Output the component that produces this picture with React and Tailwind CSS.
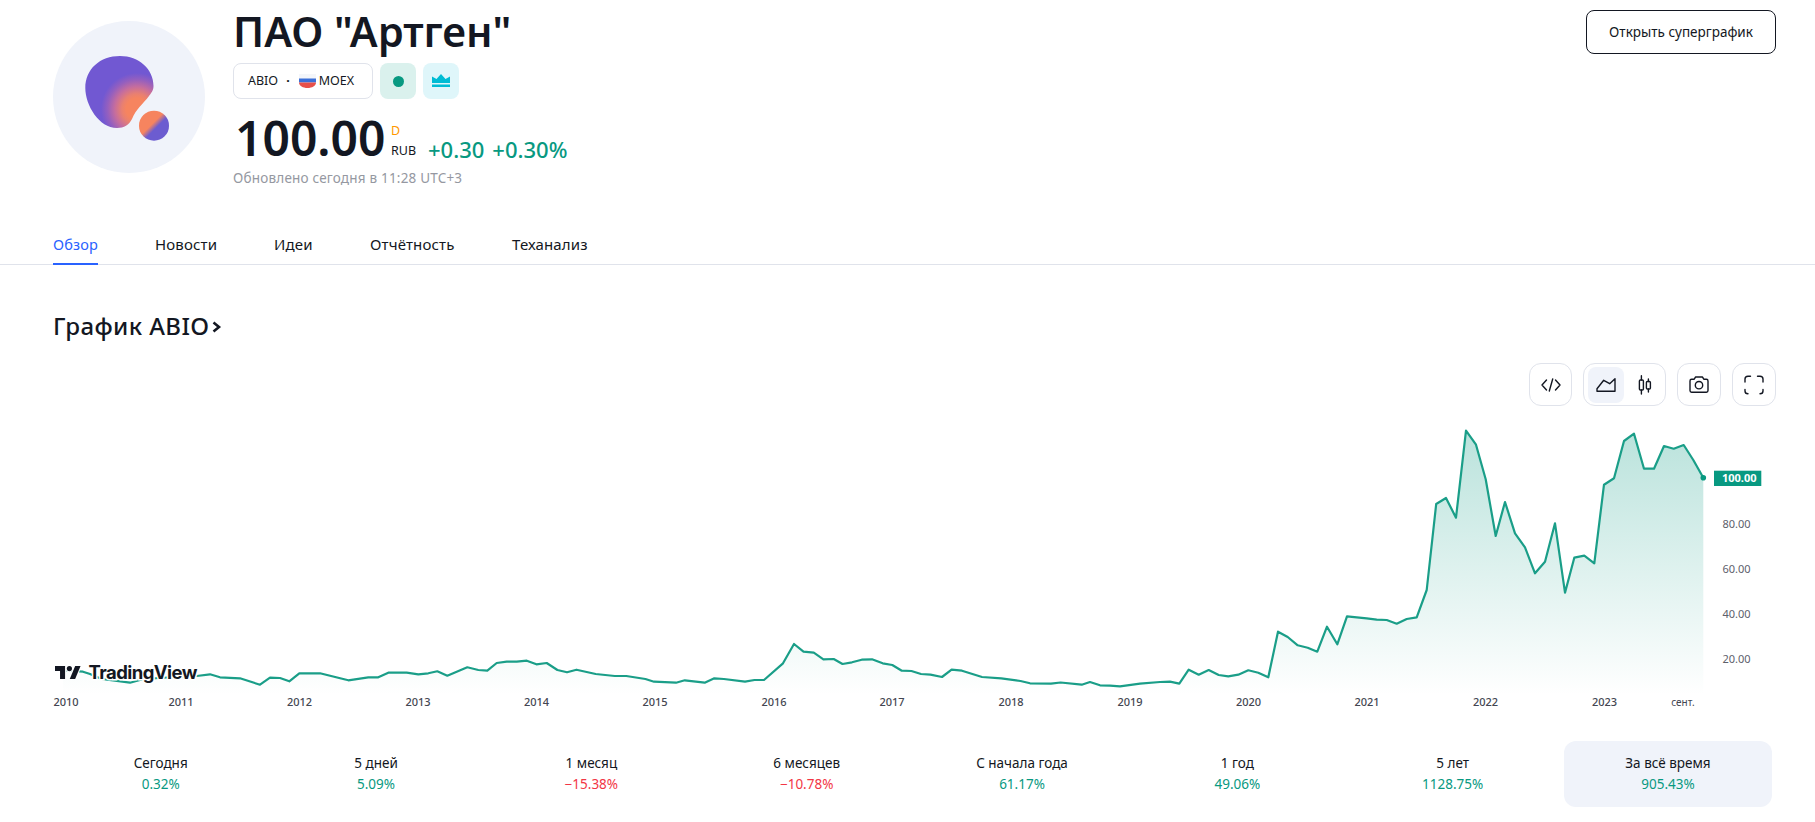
const FONT = '"Noto Sans", "Open Sans", sans-serif';

// Monthly close, already projected onto page pixels
const LINE = [
  [63,670],[73,671],[83,671.7],[90,674],[101.7,679],[130,682.7],[140,680],[158,678],[177,677],[196.7,676],[210,674.3],[220,677.3],[240,678.3],[260,684.7],[270,677.7],[280,678],[289.3,681.3],[299.3,673.3],[320,673.3],[348.3,680.3],[368.3,677.3],[378.3,677.3],[388.3,672.7],[406.7,672.7],[418.3,674.3],[428.3,673.3],[437.3,671.3],[447.3,675.7],[467.3,667.3],[478.3,670],[487.3,670.7],[496.7,663],[506.7,661.7],[516.7,661.7],[526.8,660.7],[536.4,664.3],[546.7,663],[557.4,670],[567,672.3],[576.5,669.7],[595.7,674],[614.8,676],[626.3,676],[645.4,679],[654,681.7],[676,682.7],[684.8,680.3],[704.7,682.7],[714.3,678.3],[723.9,679],[745,681.7],[754.5,680],[764,680],[783,663.3],[794,644],[803.5,651.7],[813.8,652.7],[823.4,659.3],[833.7,659],[842.5,664],[852,662.3],[861.7,659.7],[872,659.3],[882.7,663.3],[892.3,665],[901.8,670.7],[911.4,671],[921,674],[930.5,674.7],[942,677],[951.6,669.7],[962,670.7],[982,677],[1001.3,678.3],[1020.5,681],[1030,683.3],[1051,683.7],[1060.6,682.5],[1081.7,684.7],[1090,682],[1100,685.3],[1110,685.7],[1120,686.3],[1140,683.7],[1160,682],[1170,681.7],[1179.3,683.7],[1188.7,669.7],[1198.7,674.7],[1208.7,670],[1218.7,675],[1228.3,676.3],[1238.3,674.7],[1248.3,670.3],[1258.3,672.7],[1268.3,677.3],[1278,631.7],[1287.7,637],[1297.7,645.3],[1307.7,647.7],[1317.3,651.7],[1327,626.7],[1337.3,644.3],[1347,616.3],[1366.7,618.3],[1376.7,619.7],[1386.7,620],[1396.7,623.7],[1406.7,619],[1416.7,617.3],[1426.7,590],[1436.2,504],[1446,498],[1456,517.7],[1466,430.7],[1476,444.7],[1485.7,479.3],[1495.7,536],[1505,502],[1515,533.3],[1525,547.3],[1535,573.3],[1545,561.7],[1555,523.3],[1565,592.7],[1574.3,557.7],[1584.3,555.7],[1594.3,563.3],[1604,484.7],[1614,478.3],[1624,441],[1634,433.7],[1644,468.7],[1654,468.7],[1664,446],[1673.7,448.7],[1683.7,445],[1693.3,460],[1703.3,477.7],
];

const YEARS = [
  ['2010',66],['2011',181],['2012',299.5],['2013',418],['2014',536.5],['2015',655],['2016',774],['2017',892],['2018',1011],['2019',1130],['2020',1248.5],['2021',1367],['2022',1485.5],['2023',1604.5],
];

const PRICES = [['80.00',523.7],['60.00',568.6],['40.00',613.6],['20.00',658.6]];

const PERIODS = [
  { label: 'Сегодня', value: '0.32%', up: true },
  { label: '5 дней', value: '5.09%', up: true },
  { label: '1 месяц', value: '−15.38%', up: false },
  { label: '6 месяцев', value: '−10.78%', up: false },
  { label: 'С начала года', value: '61.17%', up: true },
  { label: '1 год', value: '49.06%', up: true },
  { label: '5 лет', value: '1128.75%', up: true },
  { label: 'За всё время', value: '905.43%', up: true, active: true },
];

const TABS = [
  { label: 'Обзор', cls: 'mr-[57px] w-[45px] border-b-2 border-[#2962ff] text-[14.5px] text-[#2962ff]' },
  { label: 'Новости', cls: 'mr-[58px] w-[61px]' },
  { label: 'Идеи', cls: 'mr-[58px] w-[38px]' },
  { label: 'Отчётность', cls: 'mr-[58px] w-[84px]' },
  { label: 'Теханализ', cls: 'w-[80px]' },
];

function CompanyLogo() {
  return (
    <svg width="152" height="152" viewBox="0 0 152 152" className="shrink-0">
      <defs>
        <radialGradient id="blob" gradientUnits="userSpaceOnUse" cx="84" cy="88" r="36">
          <stop offset="0.3" stopColor="#f6845f" />
          <stop offset="0.42" stopColor="#e98070" />
          <stop offset="0.62" stopColor="#c56d9e" />
          <stop offset="0.82" stopColor="#945fbf" />
          <stop offset="1" stopColor="#7158d2" />
        </radialGradient>
        <linearGradient id="drop" x1="0.2" y1="0.2" x2="0.8" y2="0.8">
          <stop offset="0.4" stopColor="#f6845f" />
          <stop offset="0.62" stopColor="#6c5cd0" />
        </linearGradient>
      </defs>
      <circle cx="76" cy="76" r="76" fill="#f0f3fa" />
      <path
        d="M67 35C86 35 100.5 48 100.5 65C100.5 70 98 72 96 75C90 83 83 88 79 98C76 104 71 107 64 107C46 107 32.3 84 32.3 67C32.3 48 47 35 67 35Z"
        fill="url(#blob)"
      />
      <circle cx="101" cy="104.7" r="15" fill="url(#drop)" />
    </svg>
  );
}

function Flag() {
  return (
    <svg width="17" height="14" viewBox="0 0 17 14" className="shrink-0">
      <path d="M0 0H17V5H0Z" fill="#f4f6fa" />
      <path d="M0 4.5H17V8.5H0Z" fill="#3b6fd8" />
      <path d="M0 8.5H17C17 11.8 13 14 8.5 14C4 14 0 11.8 0 8.5Z" fill="#e8504a" />
    </svg>
  );
}

function ToolIcon({ children }) {
  return (
    <svg width="28" height="28" viewBox="0 0 28 28" fill="none" stroke="#131722" strokeWidth="1.4" strokeLinecap="round" strokeLinejoin="round">
      {children}
    </svg>
  );
}

function ChartToolbar() {
  const box = 'flex h-[43px] items-center justify-center rounded-xl border border-[#e0e3eb] bg-white';
  return (
    <div className="flex justify-end gap-[11px] pr-[39px]">
      <div className={`${box} w-[43px]`}>
        <ToolIcon>
          <path d="M9.5 9L5 14L9.5 19M18.5 9L23 14L18.5 19M15.7 8L12.3 20" />
        </ToolIcon>
      </div>
      <div className={`${box} w-[83px] gap-[2px] px-[3px]`}>
        <div className="flex h-[36px] w-[36px] items-center justify-center rounded-lg bg-[#f0f3fa]">
          <ToolIcon>
            <path d="M5 20.3V17.7L11.7 9.3L17.7 12.7L23 7.7V20.3Z" />
          </ToolIcon>
        </div>
        <div className="flex h-[36px] w-[36px] items-center justify-center">
          <ToolIcon>
            <path d="M11.4 4.8V9M11.4 19V23M18.4 8V10.5M18.4 18V21" />
            <rect x="9.4" y="9" width="4" height="10" rx="1" />
            <rect x="16.4" y="10.5" width="4" height="7.5" rx="1" />
          </ToolIcon>
        </div>
      </div>
      <div className={`${box} w-[44px]`}>
        <ToolIcon>
          <path d="M5 10C5 9 5.6 8.3 6.6 8.3H9L10.6 6H17.4L19 8.3H21.4C22.4 8.3 23 9 23 10V19.6C23 20.6 22.4 21.2 21.4 21.2H6.6C5.6 21.2 5 20.6 5 19.6Z" />
          <circle cx="14" cy="14.2" r="3.7" />
        </ToolIcon>
      </div>
      <div className={`${box} w-[44px]`}>
        <ToolIcon>
          <path d="M5 11V8C5 6.3 6.3 5.2 8 5.2H10.5M17.5 5.2H20C21.7 5.2 23 6.3 23 8V11M5 18.5V20C5 21.7 6.3 22.8 8 22.8M23 18.5V20C23 21.7 21.7 22.8 20 22.8" />
        </ToolIcon>
      </div>
    </div>
  );
}

function PriceChart() {
  const pts = LINE.map((p) => p.join(',')).join(' ');
  const end = LINE[LINE.length - 1];
  const area = `M${LINE[0][0]},695 L${pts.replace(/ /g, ' L')} L${end[0]},695 Z`;
  return (
    <svg className="block h-[335px] w-full" viewBox="0 406 1815 335" fontFamily={FONT}>
      <defs>
        <linearGradient id="area" gradientUnits="userSpaceOnUse" x1="0" y1="430" x2="0" y2="695">
          <stop offset="0" stopColor="#089981" stopOpacity="0.28" />
          <stop offset="1" stopColor="#089981" stopOpacity="0" />
        </linearGradient>
      </defs>
      <path d={area} fill="url(#area)" />
      <polyline points={pts} fill="none" stroke="#1a9e88" strokeWidth="2.2" strokeLinejoin="round" />
      <circle cx={end[0]} cy={end[1]} r="2.8" fill="#089981" />

      <rect x="1714" y="470.7" width="47.3" height="15.3" fill="#089981" />
      <text x="1756.5" y="482.3" textAnchor="end" fontSize="11" fontWeight="700" fill="#ffffff">100.00</text>
      {PRICES.map(([t, y]) => (
        <text key={t} x="1736.5" y={y + 4} textAnchor="middle" fontSize="11" fill="#5d606b">{t}</text>
      ))}
      {YEARS.map(([t, x]) => (
        <text key={t} x={x} y="706" textAnchor="middle" fontSize="11" fontWeight="500" fill="#434651">{t}</text>
      ))}
      <text x="1683" y="706" textAnchor="middle" fontSize="10" fill="#434651">сент.</text>

      {/* TradingView attribution sits on top of the series with a white halo */}
      <g fill="#131722">
        <g transform="translate(55 666) scale(0.72)" stroke="#ffffff" strokeWidth="3" paintOrder="stroke">
          <path d="M0 0H14V18H7V7H0Z" />
          <circle cx="20" cy="3.6" r="3.6" />
          <path d="M28 0H35.5L28 18H20.5Z" />
        </g>
        <text x="88.5" y="678.5" fontFamily="Inter, sans-serif" fontSize="18.5" fontWeight="700" letterSpacing="-0.55" stroke="#ffffff" strokeWidth="3" paintOrder="stroke">TradingView</text>
      </g>
    </svg>
  );
}

export default function App() {
  return (
    <div className="h-[822px] w-full overflow-hidden bg-white text-[#131722]" style={{ fontFamily: FONT }}>
      <header className="flex h-[264px] items-start pl-[53px] pr-[39px]">
        <div className="mt-[21px]">
          <CompanyLogo />
        </div>
        <div className="ml-[28px] flex-1">
          <h1 className="h-[63px] pt-[3px] text-[41.5px] font-semibold leading-[56px]">ПАО "Артген"</h1>
          <div className="flex items-stretch gap-[7px]">
            <div className="flex h-[36px] w-[140px] items-center rounded-lg border border-[#e0e3eb] pl-[14px] text-[12.5px]">
              <span>ABIO</span>
              <span className="ml-[8px] mr-[9px] font-bold">·</span>
              <Flag />
              <span className="ml-[3px]">MOEX</span>
            </div>
            <div className="flex h-[36px] w-[36px] items-center justify-center rounded-lg bg-[#daf1ed]">
              <span className="h-[11px] w-[11px] rounded-full bg-[#089981]" />
            </div>
            <div className="flex h-[36px] w-[36px] items-center justify-center rounded-lg bg-[#dff6fa]">
              <svg width="18" height="14" viewBox="0 0 18 14" fill="#00bcd4">
                <path d="M0 2.5L4.5 5L9 0L13.5 5L18 2.5V9H0Z" />
                <rect x="0" y="10.5" width="18" height="2.5" />
              </svg>
            </div>
          </div>
          <div className="mt-[16px] flex h-[46px] items-end pl-[2px]">
            <span className="w-[148px] text-[48px] font-semibold leading-[46px]">100.00</span>
            <div className="ml-[8px] flex w-[25px] flex-col text-[12.5px] leading-[20px]">
              <span className="text-[#ff9800]">D</span>
              <span>RUB</span>
            </div>
            <div className="-mb-[3px] ml-[12px] flex gap-[8px] text-[22px] font-medium leading-[30px] text-[#089981]">
              <span>+0.30</span>
              <span>+0.30%</span>
            </div>
          </div>
          <p className="mt-[8px] text-[13.5px] leading-[18px] tracking-[0.2px] text-[#9598a1]">Обновлено сегодня в 11:28 UTC+3</p>
        </div>
        <button className="mt-[10px] flex h-[44px] w-[190px] items-center justify-center rounded-lg border border-[#131722] text-[13.5px] text-[#131722]">
          Открыть суперграфик
        </button>
      </header>

      <nav className="-mt-[37px] flex h-[38px] border-b border-[#e0e3eb] pl-[53px] text-[15px] tracking-[0.15px]">
        {TABS.map((tab) => (
          <div key={tab.label} className={`h-[38px] whitespace-nowrap leading-[35px] ${tab.cls}`}>
            {tab.label}
          </div>
        ))}
      </nav>

      <h2 className="ml-[53px] mt-[43px] flex h-[36px] items-center text-[24px] font-medium leading-[36px] tracking-[0.4px]">
        График ABIO
        <svg width="11" height="18" viewBox="0 0 11 18" fill="none" stroke="#131722" strokeWidth="2.6" className="ml-[1px] mt-[2px]">
          <path d="M2.5 4.5L8 9L2.5 13.5" />
        </svg>
      </h2>

      <div className="mt-[19px]">
        <ChartToolbar />
      </div>

      <PriceChart />

      <div className="ml-[56.7px] grid w-[1715.3px] grid-cols-8 gap-[7.33px]">
        {PERIODS.map((p) => (
          <div
            key={p.label}
            className={`flex h-[66px] flex-col items-center justify-center rounded-xl text-[13.5px] leading-[21px] ${p.active ? 'bg-[#f0f3fa]' : ''}`}
          >
            <span>{p.label}</span>
            <span className={p.up ? 'text-[#089981]' : 'text-[#f23645]'}>{p.value}</span>
          </div>
        ))}
      </div>
    </div>
  );
}
